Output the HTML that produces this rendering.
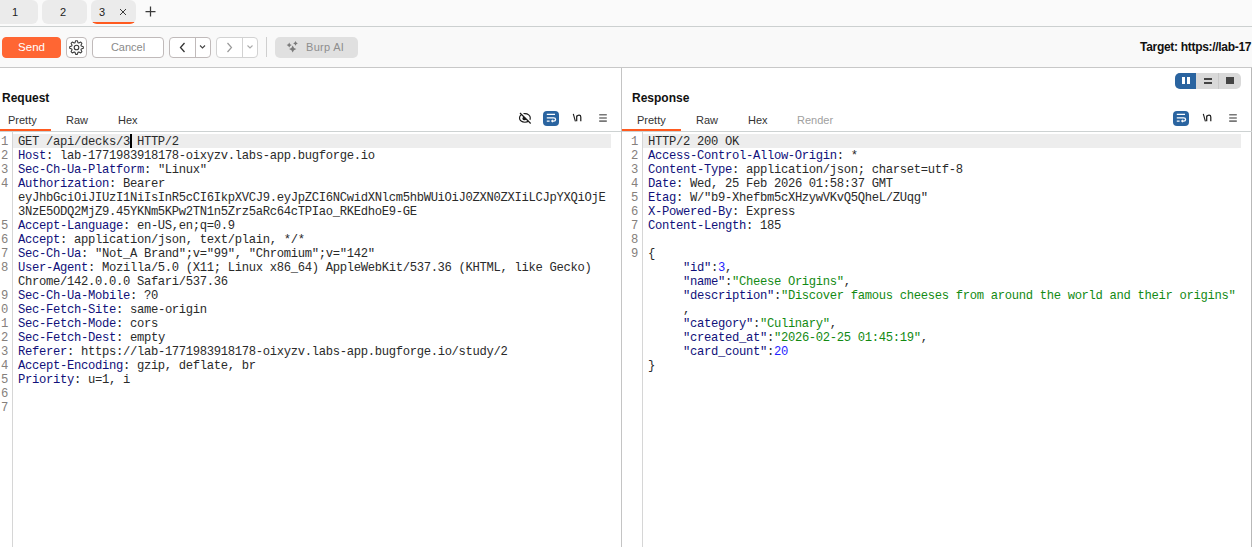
<!DOCTYPE html>
<html><head><meta charset="utf-8"><style>
*{box-sizing:border-box;margin:0;padding:0}
html,body{width:1252px;height:547px;overflow:hidden;background:#fff;font-family:"Liberation Sans",sans-serif;color:#1f1f1f}
.a{position:absolute}
.tab{position:absolute;top:0;height:24px;background:#ebebeb;border-radius:0 0 6px 6px;font-size:11px;color:#222}
.tab span{position:absolute;top:6px}
.btn{position:absolute;top:37px;height:21px;border:1px solid #c0baba;border-radius:4px;background:#fff;font-size:11px;line-height:19px;text-align:center}
.mono{font-family:"Liberation Mono",monospace;font-size:12.2px;letter-spacing:-0.32px;line-height:14px;white-space:pre}
.ptitle{position:absolute;top:91px;font-weight:bold;font-size:12px;color:#111}
.subtab{position:absolute;top:114px;font-size:11px;color:#333}
.sep{position:absolute;top:131px;height:1px;background:#cdd2d2}
.ul{position:absolute;top:129px;height:2px;background:#ff5a1f}
.gutter{position:absolute;top:132px;width:1px;height:415px;background:#d6d6d6}
.hl{position:absolute;top:134px;height:14px;background:#ededed}
.ln{position:absolute;color:#85807c;text-align:right}
.code{position:absolute;color:#2a2a2a}
.k{color:#10107a}
.s{color:#138a13}
.n{color:#1f1fff}
.cur{display:inline-block;width:2px;height:13px;background:#000;vertical-align:-3px;margin:0 -1px}
svg{position:absolute;overflow:visible}
</style></head><body>
<div class="a" style="left:0;top:0;width:1252px;height:26px;background:#fafafa"></div>
<div class="tab" style="left:-6px;width:44px;border-radius:6px"><span style="left:18px">1</span></div>
<div class="tab" style="left:42px;width:45px;border-radius:6px"><span style="left:18px">2</span></div>
<div class="tab" style="left:91px;width:45px;border-radius:6px;overflow:hidden"><span style="left:8px">3</span>
  <div class="a" style="left:0;top:22px;width:45px;height:2px;background:#ff5a1f"></div></div>
<svg style="left:119px;top:8px" width="8" height="8"><path d="M1,1 L7,7 M7,1 L1,7" stroke="#3a3a3a" stroke-width="1" fill="none"/></svg>
<svg style="left:145px;top:6px" width="11" height="11"><path d="M5.5,0.5 V10.5 M0.5,5.5 H10.5" stroke="#3a3a3a" stroke-width="1.25" fill="none"/></svg>
<div class="a" style="left:0;top:26px;width:1252px;height:1px;background:#ccd0d0"></div>
<div class="a" style="left:0;top:27px;width:1252px;height:40px;background:#f9f9f9"></div>
<div class="a" style="left:0;top:67px;width:1252px;height:1px;background:#c8c8c8"></div>

<div class="btn" style="left:2px;width:59px;background:#ff6633;border-color:#ff6633;color:#fff;font-size:11.5px">Send</div>
<div class="btn" style="left:66px;width:21px"></div>
<svg style="left:66px;top:37px" width="21" height="21"><path d="M9.66,3.65 L11.34,3.65 L12.00,5.73 L12.81,6.06 L14.75,5.06 L15.94,6.25 L14.94,8.19 L15.27,9.00 L17.35,9.66 L17.35,11.34 L15.27,12.00 L14.94,12.81 L15.94,14.75 L14.75,15.94 L12.81,14.94 L12.00,15.27 L11.34,17.35 L9.66,17.35 L9.00,15.27 L8.19,14.94 L6.25,15.94 L5.06,14.75 L6.06,12.81 L5.73,12.00 L3.65,11.34 L3.65,9.66 L5.73,9.00 L6.06,8.19 L5.06,6.25 L6.25,5.06 L8.19,6.06 L9.00,5.73Z" stroke="#383838" stroke-width="1.05" fill="none" stroke-linejoin="round"/><circle cx="10.5" cy="10.5" r="2.3" stroke="#383838" stroke-width="1.1" fill="none"/></svg>
<div class="btn" style="left:92px;width:72px;color:#8a8a8a">Cancel</div>

<div class="btn" style="left:169px;width:42px"></div>
<div class="a" style="left:195px;top:37px;width:1px;height:21px;background:#c0baba"></div>
<svg style="left:169px;top:37px" width="42" height="21"><path d="M15.5,6 L11.5,10.5 L15.5,15" stroke="#333" stroke-width="1.3" fill="none"/><path d="M31,8.5 L33.5,11 L36,8.5" stroke="#444" stroke-width="1.1" fill="none"/></svg>
<div class="btn" style="left:216px;width:42px;border-color:#d2d2d2"></div>
<div class="a" style="left:242px;top:37px;width:1px;height:21px;background:#d2d2d2"></div>
<svg style="left:216px;top:37px" width="42" height="21"><path d="M11.5,6 L15.5,10.5 L11.5,15" stroke="#999" stroke-width="1.2" fill="none"/><path d="M31.5,8.5 L34,11 L36.5,8.5" stroke="#aaa" stroke-width="1.1" fill="none"/></svg>
<div class="a" style="left:266px;top:37px;width:1px;height:20px;background:#cfcfcf"></div>
<div class="a" style="left:275px;top:37px;width:83px;height:21px;background:#e0e0e0;border-radius:5px"></div>
<svg style="left:275px;top:37px" width="83" height="21"><path d="M17.7,8.4 Q18.4,11.3 21.3,12 Q18.4,12.7 17.7,15.6 Q17.0,12.7 14.1,12 Q17.0,11.3 17.7,8.4Z M14.2,5.4 Q14.7,7.5 16.8,8 Q14.7,8.5 14.2,10.6 Q13.7,8.5 11.6,8 Q13.7,7.5 14.2,5.4Z M20.5,4.1000000000000005 Q20.95,5.95 22.8,6.4 Q20.95,6.8500000000000005 20.5,8.7 Q20.05,6.8500000000000005 18.2,6.4 Q20.05,5.95 20.5,4.1000000000000005Z" fill="#7a7a7a"/></svg>
<div class="a" style="left:306px;top:41px;font-size:11px;letter-spacing:0.3px;color:#8e8e8e">Burp AI</div>

<div class="a" style="left:1140px;top:40px;font-size:12px;font-weight:bold;letter-spacing:-0.3px;white-space:nowrap;color:#111">Target: https://lab-17</div>

<!-- layout toggles -->
<div class="a" style="left:1175px;top:73px;width:66px;height:16px;background:#d9d9d9;border-radius:5px;overflow:hidden">
  <div class="a" style="left:0;top:0;width:21px;height:16px;background:#2a64a0"></div>
  <div class="a" style="left:7px;top:4px;width:3px;height:7px;background:#fff"></div>
  <div class="a" style="left:12px;top:4px;width:3px;height:7px;background:#fff"></div>
  <div class="a" style="left:29px;top:4.5px;width:8px;height:2.3px;background:#444"></div>
  <div class="a" style="left:29px;top:8.7px;width:8px;height:2.3px;background:#444"></div>
  <div class="a" style="left:43px;top:0;width:1px;height:16px;background:#c8c8c8"></div>
  <div class="a" style="left:51px;top:4.4px;width:8px;height:6.5px;background:#444"></div>
</div>

<!-- request panel -->
<div class="ptitle" style="left:2px">Request</div>
<div class="subtab" style="left:8px">Pretty</div>
<div class="subtab" style="left:66px">Raw</div>
<div class="subtab" style="left:118px">Hex</div>
<div class="sep" style="left:0;width:621px"></div>
<div class="ul" style="left:0;width:51px"></div>
<svg style="left:517px;top:111px" width="16" height="15"><ellipse cx="7.9" cy="6.9" rx="5.4" ry="4.3" stroke="#1a1a1a" stroke-width="1.15" fill="none"/><circle cx="7.4" cy="7.4" r="1.9" fill="#1a1a1a"/><path d="M3.8,1.2 L14.5,11.7" stroke="#fff" stroke-width="1.7"/><path d="M3,2 L13.7,12.5" stroke="#1a1a1a" stroke-width="1.2"/></svg>
<div class="a" style="left:543px;top:111px;width:16px;height:15px;background:#2a64a0;border-radius:4px"></div>
<svg style="left:543px;top:111px" width="16" height="15"><path d="M3.8,3.4 H12 M3.8,6.8 H10.6 Q12.6,6.8 12.6,8.4 Q12.6,10 10.6,10 H9 M3.8,10 H6.6" stroke="#fff" stroke-width="1.25" fill="none"/><path d="M10,8.8 L8.6,10 L10,11.2" stroke="#fff" stroke-width="1.1" fill="none"/></svg>
<svg style="left:572px;top:113px" width="12" height="10"><path d="M1.3,0.8 L3.4,8.3" stroke="#1a1a1a" stroke-width="1.1" fill="none"/><path d="M4.7,8.3 V2.4 M4.7,3.6 Q5.6,2.2 7,2.2 Q8.8,2.2 8.8,4 V8.3" stroke="#1a1a1a" stroke-width="1.2" fill="none"/></svg>
<svg style="left:598px;top:113px" width="10" height="10"><path d="M1.2,1.8 H8.8 M1.2,5 H8.8 M1.2,8.1 H8.8" stroke="#777" stroke-width="1.6" fill="none"/></svg>
<div class="gutter" style="left:12px"></div>
<div class="hl" style="left:13px;width:598px"></div>
<div class="a" style="left:130px;top:134px;width:2px;height:14px;background:#000;z-index:5"></div>

<div class="a" style="left:621px;top:68px;width:1px;height:479px;background:#c4c4c4"></div>
<div class="a" style="left:1251px;top:68px;width:1px;height:479px;background:#b9b9b9"></div>

<!-- response panel -->
<div class="ptitle" style="left:632px">Response</div>
<div class="subtab" style="left:637px">Pretty</div>
<div class="subtab" style="left:696px">Raw</div>
<div class="subtab" style="left:748px">Hex</div>
<div class="subtab" style="left:797px;color:#a0a0a0">Render</div>
<div class="sep" style="left:622px;width:630px"></div>
<div class="ul" style="left:622px;width:59px"></div>
<div class="a" style="left:1173px;top:111px;width:16px;height:15px;background:#2a64a0;border-radius:4px"></div>
<svg style="left:1173px;top:111px" width="16" height="15"><path d="M3.8,3.4 H12 M3.8,6.8 H10.6 Q12.6,6.8 12.6,8.4 Q12.6,10 10.6,10 H9 M3.8,10 H6.6" stroke="#fff" stroke-width="1.25" fill="none"/><path d="M10,8.8 L8.6,10 L10,11.2" stroke="#fff" stroke-width="1.1" fill="none"/></svg>
<svg style="left:1202px;top:113px" width="12" height="10"><path d="M1.3,0.8 L3.4,8.3" stroke="#1a1a1a" stroke-width="1.1" fill="none"/><path d="M4.7,8.3 V2.4 M4.7,3.6 Q5.6,2.2 7,2.2 Q8.8,2.2 8.8,4 V8.3" stroke="#1a1a1a" stroke-width="1.2" fill="none"/></svg>
<svg style="left:1228px;top:113px" width="10" height="10"><path d="M1.2,1.8 H8.8 M1.2,5 H8.8 M1.2,8.1 H8.8" stroke="#777" stroke-width="1.6" fill="none"/></svg>
<div class="gutter" style="left:642px"></div>
<div class="hl" style="left:643px;width:598px"></div>

<div class="mono ln" style="left:0;top:135px;width:8px">1
2
3
4


5
6
7
8

9
0
1
2
3
4
5
6
7</div>
<div class="mono code" style="left:18px;top:135px">GET /api/decks/3 HTTP/2
<span class="k">Host</span>: lab-1771983918178-oixyzv.labs-app.bugforge.io
<span class="k">Sec-Ch-Ua-Platform</span>: &quot;Linux&quot;
<span class="k">Authorization</span>: Bearer
eyJhbGciOiJIUzI1NiIsInR5cCI6IkpXVCJ9.eyJpZCI6NCwidXNlcm5hbWUiOiJ0ZXN0ZXIiLCJpYXQiOjE
3NzE5ODQ2MjZ9.45YKNm5KPw2TN1n5Zrz5aRc64cTPIao_RKEdhoE9-GE
<span class="k">Accept-Language</span>: en-US,en;q=0.9
<span class="k">Accept</span>: application/json, text/plain, */*
<span class="k">Sec-Ch-Ua</span>: &quot;Not_A Brand&quot;;v=&quot;99&quot;, &quot;Chromium&quot;;v=&quot;142&quot;
<span class="k">User-Agent</span>: Mozilla/5.0 (X11; Linux x86_64) AppleWebKit/537.36 (KHTML, like Gecko)
Chrome/142.0.0.0 Safari/537.36
<span class="k">Sec-Ch-Ua-Mobile</span>: ?0
<span class="k">Sec-Fetch-Site</span>: same-origin
<span class="k">Sec-Fetch-Mode</span>: cors
<span class="k">Sec-Fetch-Dest</span>: empty
<span class="k">Referer</span>: https://lab-1771983918178-oixyzv.labs-app.bugforge.io/study/2
<span class="k">Accept-Encoding</span>: gzip, deflate, br
<span class="k">Priority</span>: u=1, i

</div>
<div class="mono ln" style="left:630px;top:135px;width:8px">1
2
3
4
5
6
7
8
9







</div>
<div class="mono code" style="left:648px;top:135px">HTTP/2 200 OK
<span class="k">Access-Control-Allow-Origin</span>: *
<span class="k">Content-Type</span>: application/json; charset=utf-8
<span class="k">Date</span>: Wed, 25 Feb 2026 01:58:37 GMT
<span class="k">Etag</span>: W/&quot;b9-Xhefbm5cXHzywVKvQ5QheL/ZUqg&quot;
<span class="k">X-Powered-By</span>: Express
<span class="k">Content-Length</span>: 185

{
     <span class="k">&quot;id&quot;</span>:<span class="n">3</span>,
     <span class="k">&quot;name&quot;</span>:<span class="s">&quot;Cheese Origins&quot;</span>,
     <span class="k">&quot;description&quot;</span>:<span class="s">&quot;Discover famous cheeses from around the world and their origins&quot;</span>
     ,
     <span class="k">&quot;category&quot;</span>:<span class="s">&quot;Culinary&quot;</span>,
     <span class="k">&quot;created_at&quot;</span>:<span class="s">&quot;2026-02-25 01:45:19&quot;</span>,
     <span class="k">&quot;card_count&quot;</span>:<span class="n">20</span>
}</div>
</body></html>
